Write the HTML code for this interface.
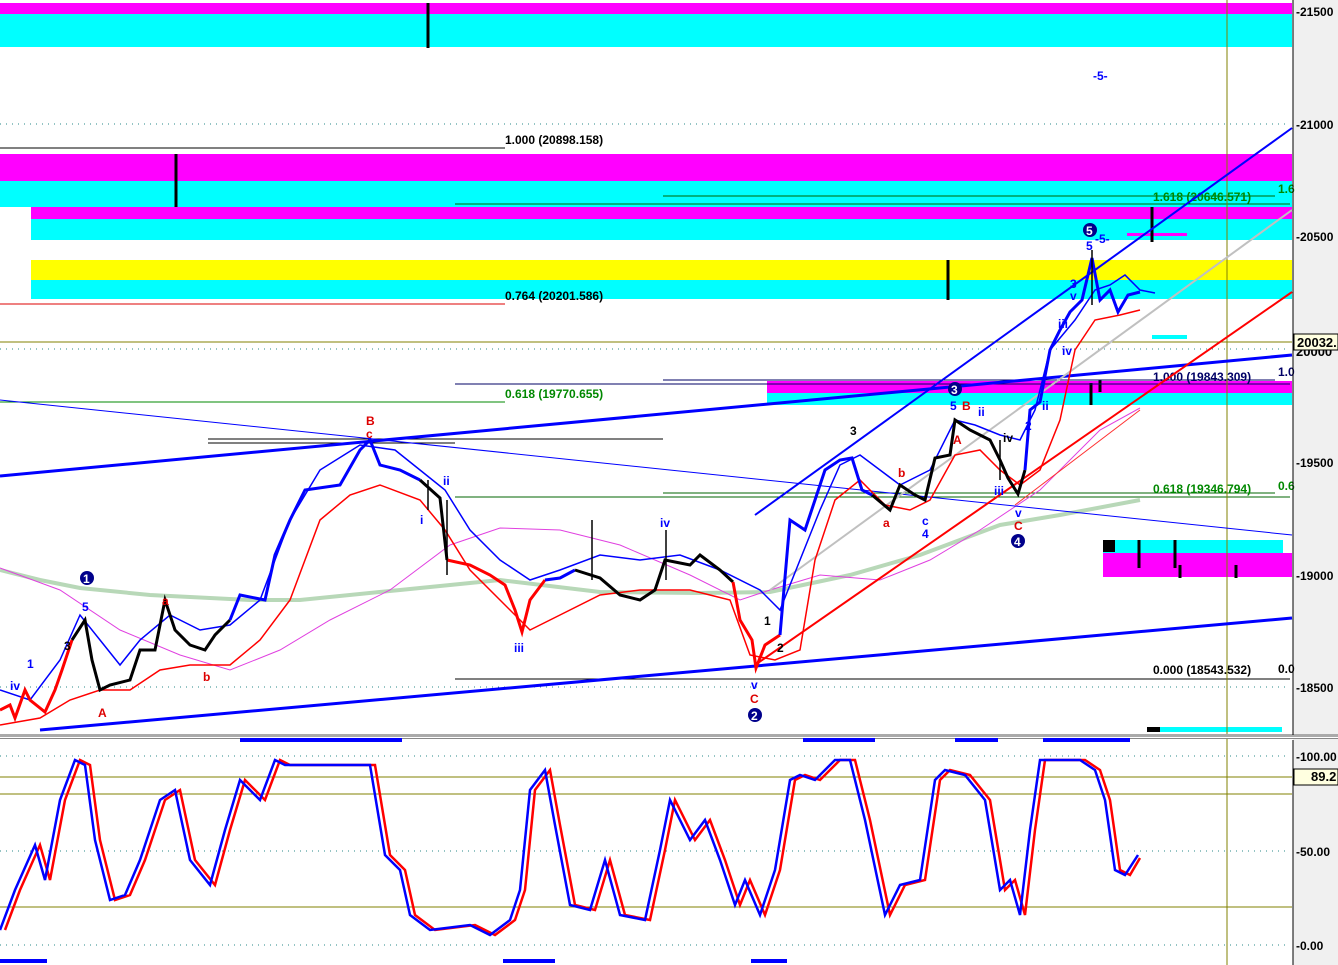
<!DOCTYPE html>
<html><head><meta charset="utf-8"><style>
html,body{margin:0;padding:0;background:#fff;width:1338px;height:965px;overflow:hidden}
svg{display:block}
text{font-family:"Liberation Sans",sans-serif;font-size:12px;font-weight:bold}
.ax{font-size:13px;fill:#000}
.s{font-size:11px;font-weight:normal}
</style></head><body>
<svg width="1338" height="965" viewBox="0 0 1338 965" xmlns="http://www.w3.org/2000/svg">
<rect x="1293" y="0" width="45" height="965" fill="#f0f0f0"/>
<rect x="0" y="3" width="1292" height="11" fill="#ff00ff"/>
<rect x="0" y="14" width="1292" height="33" fill="#00ffff"/>
<rect x="0" y="154" width="1292" height="27" fill="#ff00ff"/>
<rect x="0" y="181" width="1292" height="26" fill="#00ffff"/>
<rect x="31" y="207" width="1261" height="12" fill="#ff00ff"/>
<rect x="31" y="219" width="1261" height="21" fill="#00ffff"/>
<rect x="31" y="260" width="1261" height="20" fill="#ffff00"/>
<rect x="31" y="280" width="1261" height="19" fill="#00ffff"/>
<rect x="767" y="381" width="525" height="12" fill="#ff00ff"/>
<rect x="767" y="393" width="525" height="12" fill="#00ffff"/>
<rect x="1103" y="540" width="180" height="13" fill="#00ffff"/>
<rect x="1103" y="553" width="189" height="24" fill="#ff00ff"/>
<rect x="1103" y="540" width="12" height="12" fill="#000"/>
<rect x="1127" y="233" width="60" height="3" fill="#ff00ff"/>
<rect x="1127" y="236" width="60" height="3" fill="#00ffff"/>
<rect x="1152" y="335" width="35" height="4" fill="#00ffff"/>
<rect x="1160" y="727" width="122" height="5" fill="#00ffff"/>
<rect x="1147" y="727" width="13" height="5" fill="#000"/>
<g stroke="#000" stroke-width="3">
<line x1="428" y1="3" x2="428" y2="48"/><line x1="176" y1="154" x2="176" y2="207"/>
<line x1="948" y1="260" x2="948" y2="300"/><line x1="1152" y1="207" x2="1152" y2="242"/>
<line x1="1139" y1="540" x2="1139" y2="568"/><line x1="1175" y1="540" x2="1175" y2="568"/>
<line x1="1091" y1="383" x2="1091" y2="405"/><line x1="1100" y1="380" x2="1100" y2="392"/>
<line x1="1180" y1="565" x2="1180" y2="578"/><line x1="1236" y1="565" x2="1236" y2="578"/>
</g>
<g stroke="#2a8a8a" stroke-width="1" stroke-dasharray="1,5">
<line x1="0" y1="124" x2="1290" y2="124"/><line x1="0" y1="349" x2="1290" y2="349"/>
<line x1="0" y1="687" x2="1290" y2="687"/><line x1="0" y1="756" x2="1290" y2="756"/>
<line x1="0" y1="851" x2="1290" y2="851"/><line x1="0" y1="945" x2="1290" y2="945"/>
</g>
<g stroke-width="1">
<line x1="0" y1="148" x2="505" y2="148" stroke="#000"/>
<line x1="0" y1="304" x2="505" y2="304" stroke="#d00"/>
<line x1="0" y1="402" x2="505" y2="402" stroke="#080"/>
<line x1="455" y1="204" x2="1290" y2="204" stroke="#060"/>
<line x1="663" y1="196" x2="1275" y2="196" stroke="#060"/>
<line x1="455" y1="384" x2="1290" y2="384" stroke="#006"/>
<line x1="663" y1="380" x2="1275" y2="380" stroke="#006"/>
<line x1="455" y1="497" x2="1290" y2="497" stroke="#060"/>
<line x1="663" y1="493" x2="1275" y2="493" stroke="#060"/>
<line x1="455" y1="679" x2="1290" y2="679" stroke="#000"/>
<line x1="0" y1="342" x2="1292" y2="342" stroke="#808000"/>
<line x1="208" y1="439" x2="663" y2="439" stroke="#000"/>
<line x1="208" y1="443" x2="455" y2="443" stroke="#000"/>
<line x1="1227" y1="0" x2="1227" y2="965" stroke="#808000"/>
<line x1="0" y1="777" x2="1292" y2="777" stroke="#808000"/>
<line x1="0" y1="794" x2="1292" y2="794" stroke="#808000"/>
<line x1="0" y1="907" x2="1292" y2="907" stroke="#808000"/>
</g>
<text x="505" y="144" fill="#000">1.000 (20898.158)</text>
<text x="505" y="300" fill="#000">0.764 (20201.586)</text>
<text x="505" y="398" fill="#080">0.618 (19770.655)</text>
<text x="1153" y="201" fill="#080">1.618 (20646.571)</text>
<text x="1278" y="193" fill="#080">1.6</text>
<text x="1153" y="381" fill="#006">1.000 (19843.309)</text>
<text x="1278" y="376" fill="#006">1.0</text>
<text x="1153" y="493" fill="#080">0.618 (19346.794)</text>
<text x="1278" y="490" fill="#080">0.6</text>
<text x="1153" y="674" fill="#000">0.000 (18543.532)</text>
<text x="1278" y="673" fill="#000">0.0</text>
<polyline fill="none" stroke="#b8d8b8" stroke-width="4" points="0,570 40,580 80,588 150,595 250,600 300,600 400,590 500,580 600,592 700,593 770,592 850,575 920,555 1000,525 1060,515 1140,500"/>
<polyline fill="none" stroke="#e040e0" stroke-width="1" points="0,568 60,590 120,630 180,655 230,670 280,650 330,620 390,590 450,545 500,528 560,530 620,545 690,575 740,600 770,590 820,575 880,580 930,560 980,530 1040,490 1100,430 1140,408"/>
<g fill="none">
<line x1="0" y1="476" x2="1292" y2="355" stroke="#0000ff" stroke-width="3"/>
<line x1="40" y1="730" x2="1292" y2="618" stroke="#0000ff" stroke-width="3"/>
<line x1="755" y1="515" x2="1292" y2="128" stroke="#0000ff" stroke-width="2"/>
<line x1="0" y1="400" x2="1292" y2="535" stroke="#0000ff" stroke-width="1"/>
<line x1="755" y1="665" x2="1292" y2="292" stroke="#ff0000" stroke-width="2"/>
<line x1="770" y1="590" x2="1292" y2="210" stroke="#c0c0c0" stroke-width="2"/>
<line x1="1015" y1="505" x2="1140" y2="410" stroke="#ff3030" stroke-width="1"/>
</g>
<polyline fill="none" stroke="#0000ff" stroke-width="1.5" points="0,690 30,700 60,660 80,615 100,640 120,665 140,640 170,615 200,630 230,625 260,600 290,520 320,470 360,445 395,450 420,470 445,490 470,530 500,560 530,580 560,570 600,555 640,560 680,555 720,570 760,590 780,610 800,560 820,510 840,465 860,455 880,470 900,485 930,470 955,420 975,425 1000,435 1020,440 1035,410 1050,350 1075,320 1095,290 1110,285 1125,275 1140,290 1155,293"/>
<polyline fill="none" stroke="#ff0000" stroke-width="1.5" points="0,725 40,718 70,700 100,690 130,690 160,670 190,665 230,665 260,640 290,600 320,520 350,495 380,485 420,500 445,530 470,570 500,600 530,630 560,615 600,595 640,590 690,590 730,600 750,655 775,660 800,650 815,560 835,500 860,480 885,505 910,510 930,500 955,455 980,450 1000,470 1020,485 1040,470 1060,420 1075,350 1095,320 1120,315 1140,310"/>
<g fill="none" stroke-width="3">
<polyline stroke="#ff0000" points="0,710 10,705 15,718 25,690 30,700 45,712 55,690 62,670 72,640"/>
<polyline stroke="#000" points="72,640 85,620 92,660 100,690 110,685 130,680 140,650 155,650 165,600 175,630 190,645 205,650 215,635 230,620"/>
<polyline stroke="#0000ff" points="230,620 240,595 265,600 275,555 290,520 305,490 340,485 360,450 370,440 380,465 400,470 420,480"/>
<polyline stroke="#000" points="420,480 440,498 447,560"/>
<polyline stroke="#ff0000" points="447,560 470,565 490,575 505,585 515,610 522,632 530,600 545,580"/>
<polyline stroke="#0000ff" points="545,580 560,578 575,570"/>
<polyline stroke="#000" points="575,570 600,578 620,595 640,600 655,590 665,560 690,565 700,555 720,570 733,582"/>
<polyline stroke="#ff0000" points="733,582 740,620 752,640 756,668 765,645 780,635"/>
<polyline stroke="#0000ff" points="780,635 790,520 805,530 815,500 825,470 840,460 852,458 862,490 872,495"/>
<polyline stroke="#000" points="872,495 890,510 900,485 915,495 925,500 935,458 950,455 955,420 970,430 990,440 1000,460 1008,478 1018,494 1025,470"/>
<polyline stroke="#0000ff" points="1025,470 1030,410 1040,402 1050,350 1060,330 1070,312 1082,300 1092,258 1100,300 1110,290 1118,312 1128,295 1140,292"/>
</g>
<g stroke="#000" stroke-width="1.5">
<line x1="428" y1="480" x2="428" y2="510"/><line x1="447" y1="500" x2="447" y2="575"/><line x1="592" y1="520" x2="592" y2="580"/>
<line x1="666" y1="530" x2="666" y2="580"/><line x1="1000" y1="440" x2="1000" y2="480"/><line x1="1092" y1="250" x2="1092" y2="305"/>
</g>
<g fill="#00008b"><circle cx="87" cy="578" r="7"/><circle cx="755" cy="715" r="7"/><circle cx="955" cy="389" r="7"/><circle cx="1018" cy="541" r="7"/><circle cx="1090" cy="230" r="7"/></g>
<g fill="#fff" font-size="11"><text x="83" y="583">1</text><text x="751" y="720">2</text><text x="951" y="394">3</text><text x="1014" y="546">4</text><text x="1086" y="235">5</text></g>
<g class="s">
<text x="10" y="690" fill="#00f">iv</text><text x="27" y="668" fill="#00f">1</text><text x="82" y="611" fill="#00f">5</text><text x="64" y="650" fill="#000">3</text>
<text x="98" y="717" fill="#d00">A</text><text x="162" y="605" fill="#d00">a</text><text x="203" y="681" fill="#d00">b</text>
<text x="366" y="425" fill="#d00">B</text><text x="366" y="438" fill="#d00">c</text><text x="420" y="524" fill="#00f">i</text><text x="443" y="485" fill="#00f">ii</text>
<text x="514" y="652" fill="#00f">iii</text><text x="660" y="527" fill="#00f">iv</text><text x="751" y="689" fill="#00f">v</text><text x="750" y="703" fill="#d00">C</text>
<text x="764" y="625" fill="#000">1</text><text x="777" y="652" fill="#000">2</text><text x="850" y="435" fill="#000">3</text><text x="898" y="477" fill="#d00">b</text>
<text x="883" y="527" fill="#d00">a</text><text x="922" y="525" fill="#00f">c</text><text x="922" y="538" fill="#00f">4</text>
<text x="950" y="410" fill="#00f">5</text><text x="953" y="444" fill="#d00">A</text><text x="962" y="410" fill="#d00">B</text><text x="978" y="416" fill="#00f">ii</text>
<text x="994" y="495" fill="#00f">iii</text><text x="1003" y="442" fill="#000">iv</text><text x="1015" y="517" fill="#00f">v</text><text x="1014" y="530" fill="#d00">C</text>
<text x="1025" y="430" fill="#00f">2</text><text x="1042" y="410" fill="#00f">ii</text><text x="1062" y="355" fill="#00f">iv</text><text x="1058" y="328" fill="#00f">iii</text>
<text x="1070" y="300" fill="#00f">v</text><text x="1070" y="288" fill="#00f">3</text><text x="1086" y="250" fill="#00f">5</text><text x="1093" y="80" fill="#00f">-5-</text><text x="1095" y="243" fill="#00f">-5-</text>
</g>
<rect x="0" y="734" width="1338" height="3" fill="#aaa"/>
<rect x="0" y="737" width="1338" height="1" fill="#fff"/>
<rect x="0" y="738" width="1338" height="1" fill="#888"/>
<g fill="#0000ff">
<rect x="240" y="738" width="162" height="4"/><rect x="803" y="738" width="72" height="4"/><rect x="955" y="738" width="43" height="4"/><rect x="1043" y="738" width="87" height="4"/>
<rect x="0" y="959" width="47" height="4"/><rect x="503" y="959" width="52" height="4"/><rect x="751" y="959" width="36" height="4"/>
</g>
<polyline fill="none" stroke="#ff0000" stroke-width="2.5" points="5,930 20,890 40,845 50,880 65,800 80,760 90,765 100,840 115,900 130,895 145,860 165,800 180,790 195,860 215,885 230,830 245,780 265,800 280,760 290,765 375,765 390,855 405,870 415,915 435,930 475,925 495,935 515,920 525,890 535,790 550,770 560,825 575,905 595,910 610,860 625,915 650,920 665,850 675,800 695,840 710,820 725,860 740,905 750,880 765,915 780,870 795,780 805,775 820,780 840,760 855,760 870,820 890,915 905,885 925,880 940,780 950,770 970,775 990,800 1005,890 1015,880 1025,915 1035,830 1045,760 1085,760 1100,770 1110,800 1120,870 1130,875 1140,858"/>
<polyline fill="none" stroke="#0000ff" stroke-width="2.5" points="0,930 15,890 35,845 45,880 60,800 75,760 85,765 95,840 110,900 125,895 140,860 160,800 175,790 190,860 210,885 225,830 240,780 260,800 275,760 285,765 370,765 385,855 400,870 410,915 430,930 470,925 490,935 510,920 520,890 530,790 545,770 555,825 570,905 590,910 605,860 620,915 645,920 660,850 670,800 690,840 705,820 720,860 735,905 745,880 760,915 775,870 790,780 800,775 815,780 835,760 850,760 865,820 885,915 900,885 920,880 935,780 945,770 965,775 985,800 1000,890 1010,880 1020,915 1030,830 1040,760 1080,760 1095,770 1105,800 1115,870 1125,875 1138,855"/>
<line x1="1293" y1="0" x2="1293" y2="735" stroke="#000"/>
<line x1="1293" y1="740" x2="1293" y2="965" stroke="#000"/>
<g class="ax">
<text x="1296" y="16">-21500</text><text x="1296" y="129">-21000</text><text x="1296" y="241">-20500</text>
<text x="1296" y="467">-19500</text><text x="1296" y="580">-19000</text><text x="1296" y="692">-18500</text>
<text x="1296" y="761">-100.00</text><text x="1296" y="856">-50.00</text><text x="1296" y="950">-0.00</text>
</g>
<text class="ax" x="1296" y="356">20000</text>
<rect x="1294" y="334" width="44" height="16" fill="#ffffe0" stroke="#000" stroke-width="1"/>
<text class="ax" x="1297" y="347">20032.</text>
<rect x="1294" y="769" width="44" height="16" fill="#ffffe0" stroke="#000" stroke-width="1"/>
<text class="ax" x="1311" y="781">89.2</text>
</svg>
</body></html>
